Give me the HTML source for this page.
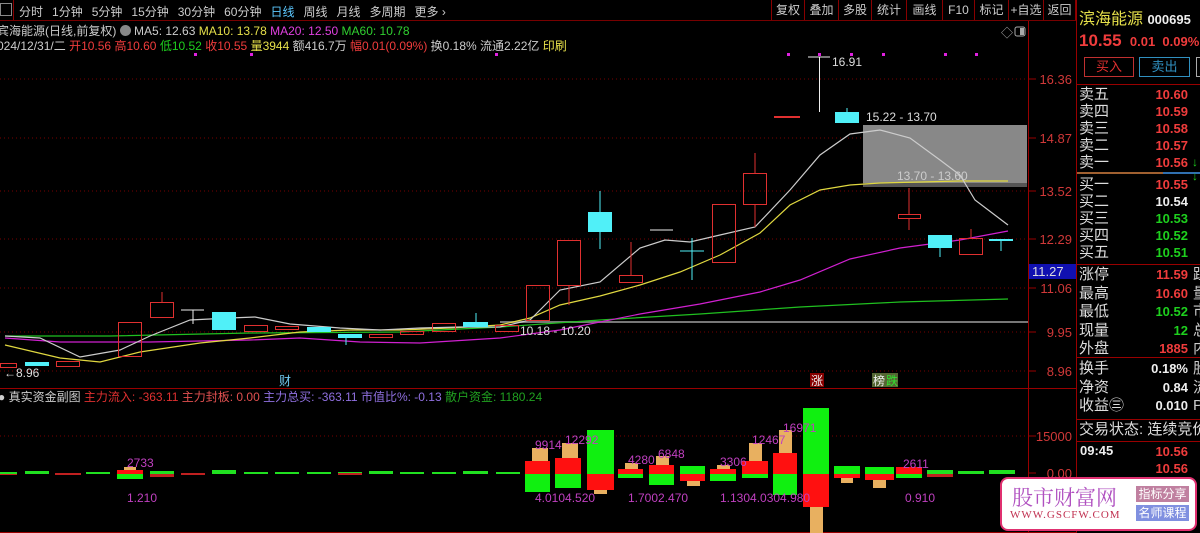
<!DOCTYPE html>
<html><head><meta charset="utf-8"><style>
*{margin:0;padding:0;box-sizing:border-box}
body{width:1200px;height:533px;background:#000;overflow:hidden;position:relative;font-family:"Liberation Sans","Noto Sans CJK SC",sans-serif;font-size:12px;color:#ccc}
.a{position:absolute;white-space:nowrap}
.tb span{margin-right:9px}
.rb{position:absolute;top:0;height:20px;border-left:1px solid #800;line-height:20px;text-align:center;color:#ccc;font-size:12px}
.r{position:absolute;left:1079px;font-size:15px;color:#ddd;line-height:17px;white-space:nowrap}
.v{position:absolute;right:12px;font-size:13px;font-weight:bold;line-height:17px;text-align:right;white-space:nowrap}
.red{color:#f03c3c}.grn{color:#1ed01e}.wht{color:#eee}
</style></head><body>
<!-- toolbar -->
<div class="a" style="left:0;top:0;width:1077px;height:21px;border-bottom:1px solid #700"></div>
<div class="a" style="left:0;top:3px;width:12px;height:13px;border:1px solid #888"></div>
<div class="a" style="left:13px;top:0;width:1px;height:20px;background:#800"></div>
<div class="a tb" style="left:19px;top:3px;font-size:12px;color:#ccc"><span>分时</span><span>1分钟</span><span>5分钟</span><span>15分钟</span><span>30分钟</span><span>60分钟</span><span style="color:#5cc8ff">日线</span><span>周线</span><span>月线</span><span>多周期</span><span>更多 ›</span></div>
<div class="rb" style="left:771px;width:33px">复权</div>
<div class="rb" style="left:804px;width:34px">叠加</div>
<div class="rb" style="left:838px;width:33px">多股</div>
<div class="rb" style="left:871px;width:35px">统计</div>
<div class="rb" style="left:906px;width:36px">画线</div>
<div class="rb" style="left:942px;width:32px">F10</div>
<div class="rb" style="left:974px;width:34px">标记</div>
<div class="rb" style="left:1008px;width:35px">+自选</div>
<div class="rb" style="left:1043px;width:33px;border-right:1px solid #800">返回</div>
<!-- header text -->
<div class="a" style="left:-3px;top:22px;font-size:12px;color:#ccc">宾海能源(日线,前复权) <span style="display:inline-block;width:11px;height:11px;border-radius:6px;background:#888;vertical-align:-1px"></span> <span>MA5: 12.63</span> <span style="color:#e6e04a">MA10: 13.78</span> <span style="color:#e040e0">MA20: 12.50</span> <span style="color:#30d030">MA60: 10.78</span></div>
<div class="a" style="left:-3px;top:37px;font-size:12px;color:#ccc">024/12/31/二 <span class="red">开10.56</span> <span class="red">高10.60</span> <span class="grn">低10.52</span> <span class="red">收10.55</span> <span style="color:#e6e04a">量3944</span> 额416.7万 <span class="red">幅0.01(0.09%)</span> 换0.18% 流通2.22亿 <span style="color:#e6e04a">印刷</span></div>
<svg class="a" style="left:0;top:0" width="1077" height="533">
<g stroke="#700" stroke-dasharray="1,3"><line x1="0" x2="1028" y1="79" y2="79"/><line x1="0" x2="1028" y1="138" y2="138"/><line x1="0" x2="1028" y1="191" y2="191"/><line x1="0" x2="1028" y1="239" y2="239"/><line x1="0" x2="1028" y1="288" y2="288"/><line x1="0" x2="1028" y1="332" y2="332"/><line x1="0" x2="1028" y1="371" y2="371"/><line x1="0" x2="1028" y1="436" y2="436"/></g>
<line x1="1028.5" x2="1028.5" y1="21" y2="533" stroke="#900"/>
<line x1="0" x2="1077" y1="388.5" y2="388.5" stroke="#900"/>
<line x1="0" x2="1077" y1="532.5" y2="532.5" stroke="#900"/>
<g stroke="#900"><line x1="1028" x2="1036" y1="79" y2="79"/><line x1="1028" x2="1036" y1="138" y2="138"/><line x1="1028" x2="1036" y1="191" y2="191"/><line x1="1028" x2="1036" y1="239" y2="239"/><line x1="1028" x2="1036" y1="288" y2="288"/><line x1="1028" x2="1036" y1="332" y2="332"/><line x1="1028" x2="1036" y1="371" y2="371"/><line x1="1028" x2="1036" y1="436" y2="436"/><line x1="1028" x2="1036" y1="473" y2="473"/></g>
<g fill="#d03838" font-size="13" text-anchor="end" font-family="Liberation Sans"><text x="1072" y="84">16.36</text><text x="1072" y="143">14.87</text><text x="1072" y="196">13.52</text><text x="1072" y="244">12.29</text><text x="1072" y="293">11.06</text><text x="1072" y="337">9.95</text><text x="1072" y="376">8.96</text><text x="1072" y="441">15000</text><text x="1072" y="478">0.00</text></g>
<rect x="1029" y="264" width="47" height="15" fill="#1010b0"/><text x="1032" y="276" fill="#ddd" font-size="13">11.27</text>
<!-- purple dots -->
<g fill="#e020e0"><rect x="194" y="53" width="3" height="3"/><rect x="250" y="53" width="3" height="3"/><rect x="495" y="53" width="3" height="3"/><rect x="787" y="53" width="3" height="3"/><rect x="818" y="53" width="3" height="3"/><rect x="850" y="53" width="3" height="3"/><rect x="882" y="53" width="3" height="3"/><rect x="944" y="53" width="3" height="3"/><rect x="975" y="53" width="3" height="3"/></g>
<text x="1001" y="37" fill="#aaa" font-size="12">◇</text><rect x="1015" y="27" width="10" height="9" fill="none" stroke="#aaa" rx="2"/><rect x="1020" y="28" width="4" height="7" fill="#aaa"/>
<!-- gray box -->
<rect x="863" y="125" width="164" height="58" fill="#888"/><rect x="863" y="183" width="164" height="4" fill="#555"/>
<line x1="500" x2="1028" y1="322" y2="322" stroke="#777" stroke-width="2"/>
<!-- MA lines -->
<polyline fill="none" stroke="#20c020" stroke-width="1.2" points="5,336 110,336 250,333 400,332 500,327 600,320 700,314 800,307 900,302 1008,299"/>
<polyline fill="none" stroke="#d020d0" stroke-width="1.2" points="5,338 60,342 150,342 250,340 300,338 360,342 420,343 500,338 560,330 640,314 700,304 760,292 800,280 850,259 900,248 960,240 1008,231"/>
<polyline fill="none" stroke="#e0d840" stroke-width="1.2" points="5,345 60,358 100,362 140,352 200,343 250,338 300,332 350,330 400,330 450,328 500,325 530,318 560,305 600,296 640,285 680,272 720,255 760,233 790,205 820,190 850,185 880,183 920,182 960,181 1008,181"/>
<polyline fill="none" stroke="#ccc" stroke-width="1.2" points="5,336 40,338 80,357 120,350 150,336 190,320 230,318 255,317 290,324 340,328 380,330 420,328 460,327 500,327 530,320 560,290 600,282 640,248 665,240 690,242 720,235 755,227 790,190 820,155 850,134 880,130 910,138 940,160 960,175 975,200 1008,225"/>
<!-- candles -->
<g fill="none" stroke="#e03030" stroke-width="1">
<rect x="0.5" y="363.5" width="16" height="4"/><rect x="56.5" y="361.5" width="23" height="5"/><rect x="118.5" y="322.5" width="23" height="34"/><rect x="150.5" y="302.5" width="23" height="15"/><line x1="162" x2="162" y1="292" y2="302"/><rect x="244.5" y="325.5" width="23" height="6"/><rect x="275.5" y="326.5" width="23" height="3"/><rect x="369.5" y="334.5" width="23" height="3"/><rect x="400.5" y="331.5" width="23" height="3"/><rect x="432.5" y="323.5" width="23" height="8"/><rect x="495.5" y="325.5" width="23" height="6"/>
<rect x="526.5" y="285.5" width="23" height="35"/><rect x="557.5" y="240.5" width="23" height="45"/><line x1="569" x2="569" y1="285" y2="305"/><rect x="619.5" y="275.5" width="23" height="7"/><line x1="631" x2="631" y1="242" y2="275"/><rect x="712.5" y="204.5" width="23" height="58"/><rect x="743.5" y="173.5" width="23" height="31"/><line x1="755" x2="755" y1="153" y2="173"/><line x1="755" x2="755" y1="204" y2="227"/><rect x="898.5" y="214.5" width="22" height="4"/><line x1="909" x2="909" y1="188" y2="214"/><line x1="909" x2="909" y1="218" y2="230"/><rect x="959.5" y="238.5" width="23" height="16"/><line x1="971" x2="971" y1="229" y2="238"/></g>
<rect x="774" y="116" width="26" height="2" fill="#e03030"/>
<g fill="#50f0f8"><rect x="25" y="362" width="24" height="4"/><rect x="212" y="312" width="24" height="18"/><rect x="307" y="327" width="24" height="5"/><rect x="338" y="334" width="24" height="4"/><rect x="463" y="322" width="25" height="5"/><rect x="588" y="212" width="24" height="20"/><rect x="835" y="112" width="24" height="11"/><rect x="928" y="235" width="24" height="13"/><rect x="989" y="239" width="24" height="2"/></g>
<g stroke="#50f0f8"><line x1="600" x2="600" y1="191" y2="249"/><line x1="346" x2="346" y1="338" y2="345"/><line x1="476" x2="476" y1="313" y2="322"/><line x1="692" x2="692" y1="238" y2="280"/><line x1="680" x2="704" y1="251" y2="251"/><line x1="847" x2="847" y1="108" y2="112"/><line x1="940" x2="940" y1="248" y2="257"/><line x1="1001" x2="1001" y1="240" y2="251"/></g>
<g stroke="#eee"><line x1="181" x2="204" y1="310" y2="310"/><line x1="193" x2="193" y1="310" y2="324"/><line x1="650" x2="673" y1="230" y2="230"/><line x1="808" x2="830" y1="57" y2="57"/><line x1="819.5" x2="819.5" y1="57" y2="112"/></g>
<g fill="#ddd" font-size="12"><text x="832" y="66">16.91</text><text x="866" y="121">15.22 - 13.70</text><text x="897" y="180" fill="#ccc">13.70 - 13.60</text><text x="520" y="335">10.18 - 10.20</text><text x="4" y="377">←8.96</text></g>
<text x="279" y="385" fill="#70c8f0" font-size="12">财</text>
<rect x="810" y="373" width="14" height="14" fill="#800"/><text x="811" y="385" fill="#eee" font-size="12">涨</text>
<rect x="872" y="373" width="26" height="14" fill="#563"/><text x="873" y="385" fill="#eee" font-size="12">榜</text><text x="886" y="385" fill="#30e030" font-size="12">跌</text>
<!-- sub header -->
<text x="-2" y="401" font-size="12" fill="#ccc">● 真实资金副图 <tspan fill="#e03030">主力流入: -363.11</tspan> <tspan fill="#e05050">主力封板: 0.00</tspan> <tspan fill="#9070e0">主力总买: -363.11</tspan> <tspan fill="#9070e0">市值比%: -0.13</tspan> <tspan fill="#20a020">散户资金: 1180.24</tspan></text>
<!-- sub bars small -->
<g fill="#20e020"><rect x="25" y="471" width="24" height="3"/><rect x="150" y="471" width="24" height="3"/><rect x="212" y="470" width="24" height="4"/><rect x="307" y="472" width="24" height="2"/><rect x="369" y="471" width="24" height="3"/><rect x="463" y="471" width="25" height="3"/><rect x="0" y="472" width="17" height="2"/><rect x="86" y="472" width="24" height="2"/><rect x="400" y="472" width="24" height="2"/><rect x="432" y="472" width="24" height="2"/><rect x="496" y="472" width="24" height="2"/><rect x="244" y="472" width="24" height="2"/><rect x="275" y="472" width="24" height="2"/><rect x="338" y="472" width="24" height="2"/><rect x="927" y="470" width="26" height="4"/><rect x="958" y="471" width="26" height="3"/><rect x="989" y="470" width="26" height="4"/></g>
<g fill="#c02020"><rect x="0" y="474" width="17" height="1"/><rect x="55" y="473" width="26" height="2"/><rect x="150" y="474" width="24" height="3"/><rect x="181" y="473" width="24" height="2"/><rect x="338" y="473" width="24" height="2"/><rect x="927" y="474" width="26" height="3"/></g>
<!-- sub bars big -->
<g fill="#ff1010"><rect x="117" y="470" width="26" height="4"/><rect x="525" y="461" width="25" height="13"/><rect x="555" y="458" width="26" height="16"/><rect x="587" y="474" width="27" height="16"/><rect x="618" y="469" width="25" height="5"/><rect x="649" y="465" width="25" height="9"/><rect x="680" y="474" width="25" height="7"/><rect x="710" y="469" width="26" height="5"/><rect x="742" y="461" width="26" height="13"/><rect x="773" y="453" width="24" height="21"/><rect x="803" y="474" width="26" height="33"/><rect x="834" y="474" width="26" height="4"/><rect x="865" y="474" width="29" height="6"/><rect x="896" y="467" width="26" height="7"/></g>
<g fill="#10f010"><rect x="117" y="474" width="26" height="5"/><rect x="525" y="474" width="25" height="18"/><rect x="555" y="474" width="26" height="14"/><rect x="587" y="430" width="27" height="44"/><rect x="618" y="474" width="25" height="4"/><rect x="649" y="474" width="25" height="11"/><rect x="680" y="466" width="25" height="8"/><rect x="710" y="474" width="26" height="7"/><rect x="742" y="474" width="26" height="4"/><rect x="773" y="474" width="24" height="21"/><rect x="803" y="408" width="26" height="66"/><rect x="834" y="466" width="26" height="8"/><rect x="865" y="467" width="29" height="7"/><rect x="896" y="474" width="26" height="4"/></g>
<g fill="#e8b060"><rect x="124" y="467" width="12" height="3"/><rect x="532" y="448" width="16" height="13"/><rect x="562" y="443" width="16" height="15"/><rect x="594" y="490" width="13" height="4"/><rect x="625" y="463" width="13" height="6"/><rect x="656" y="456" width="13" height="9"/><rect x="687" y="481" width="13" height="5"/><rect x="717" y="465" width="13" height="4"/><rect x="749" y="443" width="13" height="18"/><rect x="779" y="430" width="13" height="23"/><rect x="810" y="507" width="13" height="26"/><rect x="841" y="478" width="12" height="5"/><rect x="873" y="480" width="13" height="8"/></g>
<g fill="#c040c0" font-size="12"><text x="127" y="467">2733</text><text x="127" y="502">1.210</text><text x="535" y="449">9914</text><text x="565" y="444">12292</text><text x="628" y="464">4280</text><text x="658" y="458">6848</text><text x="720" y="466">3306</text><text x="752" y="444">12467</text><text x="783" y="432">16971</text><text x="903" y="468">2611</text><text x="535" y="502">4.0104.520</text><text x="628" y="502">1.7002.470</text><text x="720" y="502">1.1304.0304.980</text><text x="905" y="502">0.910</text></g>
</svg>
<!-- right panel -->
<div class="a" style="left:1076px;top:0;width:1px;height:533px;background:#900"></div>
<div class="a" style="left:1079px;top:5px;font-size:16px;color:#e6e04a">滨海能源 <span style="color:#eee;font-size:13px;font-weight:bold">000695</span></div>
<div class="a" style="left:1079px;top:31px;font-size:17px;font-weight:bold;color:#f03c3c">10.55 <span style="font-size:13px">&nbsp;0.01 &nbsp;0.09%</span></div>
<div class="a" style="left:1084px;top:57px;width:50px;height:20px;border:1px solid #c03030;color:#e03030;text-align:center;line-height:18px;font-size:13px">买入</div>
<div class="a" style="left:1139px;top:57px;width:51px;height:20px;border:1px solid #3090c0;color:#3090c0;text-align:center;line-height:18px;font-size:13px">卖出</div>
<div class="a" style="left:1196px;top:57px;width:10px;height:20px;border:1px solid #aaa"></div>
<div class="a" style="left:1077px;top:84px;width:123px;height:1px;background:#900"></div>
<div class="a" style="left:1077px;top:172px;width:123px;height:2px;background:linear-gradient(90deg,#a06030 70%,#3070b0 70%)"></div>
<div class="a" style="left:1077px;top:264px;width:123px;height:1px;background:#900"></div>
<div class="a" style="left:1077px;top:357px;width:123px;height:1px;background:#900"></div>
<div class="a" style="left:1077px;top:419px;width:123px;height:1px;background:#900"></div>
<div class="a" style="left:1077px;top:441px;width:123px;height:1px;background:#900"></div>
<div class="r" style="top:86px">卖五<br>卖四<br>卖三<br>卖二<br>卖一</div>
<div class="v red" style="top:86px">10.60<br>10.59<br>10.58<br>10.57<br>10.56</div>
<div class="r" style="top:176px">买一<br>买二<br>买三<br>买四<br>买五</div>
<div class="v" style="top:176px"><span class="red">10.55</span><br><span class="wht">10.54</span><br><span class="grn">10.53</span><br><span class="grn">10.52</span><br><span class="grn">10.51</span></div>
<div class="a grn" style="left:1192px;top:155px;font-size:12px;font-weight:bold">↓<br>↓</div>
<div class="r" style="top:266px;line-height:18.5px">涨停<br>最高<br>最低<br>现量<br>外盘</div>
<div class="v" style="top:266px;line-height:18.5px"><span class="red">11.59</span><br><span class="red">10.60</span><br><span class="grn">10.52</span><br><span class="grn">12</span><br><span class="red">1885</span></div>
<div class="a" style="left:1193px;top:266px;font-size:15px;line-height:18.5px;color:#ccc">跙<br>量<br>市<br>总<br>内</div>
<div class="r" style="top:360px;line-height:18.5px">换手<br>净资<br>收益㊂</div>
<div class="v wht" style="top:360px;line-height:18.5px">0.18%<br>0.84<br>0.010</div>
<div class="a" style="left:1193px;top:360px;font-size:15px;line-height:18.5px;color:#ccc">股<br>流<br>P</div>
<div class="r" style="top:421px">交易状态: 连续竞价</div>
<div class="a wht" style="left:1080px;top:443px;font-size:13px;font-weight:bold">09:45</div>
<div class="v red" style="top:443px">10.56<br>10.56</div>
<!-- watermark -->
<div class="a" style="left:1000px;top:477px;width:197px;height:54px;background:#fff;border:2px solid #e03070;border-radius:8px"></div>
<div class="a" style="left:1012px;top:482px;font-size:21px;color:#b050c0;font-family:'Noto Serif CJK SC',serif">股市财富网</div>
<div class="a" style="left:1010px;top:509px;font-size:11px;color:#c03050;font-family:'Liberation Serif',serif;letter-spacing:1px">WWW.GSCFW.COM</div>
<div class="a" style="left:1136px;top:486px;width:53px;height:16px;background:#c080a0;color:#fff;font-size:12px;text-align:center;line-height:16px">指标分享</div>
<div class="a" style="left:1136px;top:505px;width:53px;height:16px;background:#8090e0;color:#fff;font-size:12px;text-align:center;line-height:16px">名师课程</div>
</body></html>
